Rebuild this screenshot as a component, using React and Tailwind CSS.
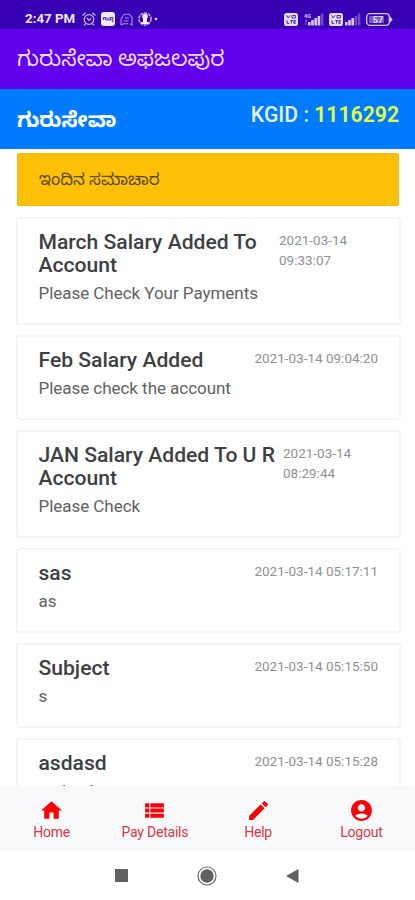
import { MdHome, MdViewList, MdEdit, MdAccountCircle } from 'react-icons/md'

const NEWS = [
  { title: ['March Salary Added To', 'Account'], body: 'Please Check Your Payments', date: '2021-03-14', time: '09:33:07', dateCls: 'w-[99px]' },
  { title: ['Feb Salary Added'], body: 'Please check the account', date: '2021-03-14', time: '09:04:20' },
  { title: ['JAN Salary Added To U R', 'Account'], body: 'Please Check', date: '2021-03-14', time: '08:29:44', dateCls: 'w-[95px]' },
  { title: ['sas'], body: 'as', date: '2021-03-14', time: '05:17:11' },
  { title: ['Subject'], body: 's', date: '2021-03-14', time: '05:15:50' },
  { title: ['asdasd'], body: 'asdasd', date: '2021-03-14', time: '05:15:28' },
]

const TABS = [
  { label: 'Home', Icon: MdHome },
  { label: 'Pay Details', Icon: MdViewList },
  { label: 'Help', Icon: MdEdit },
  { label: 'Logout', Icon: MdAccountCircle },
]

function AlarmIcon() {
  return (
    <svg width="14" height="14" viewBox="0 0 14 14" fill="none" stroke="#cdbcf5" strokeWidth="1.2" strokeLinecap="round">
      <circle cx="7" cy="7.5" r="4.8" />
      <path d="M1 3.2 3.2 1.2M13 3.2 10.8 1.2M5 6.2 7 8.4 9 6.6M3.2 12.2 2.2 13.2M10.8 12.2l1 1" />
    </svg>
  )
}

function AppBadgeIcon() {
  return (
    <svg width="14" height="14" viewBox="0 0 14 14">
      <rect width="14" height="14" rx="3" fill="#f1ebff" />
      <path d="M2.5 8V5.5h2V8M6 5.5V8h2V5.5M9.5 5.5h2.2V8H9.5zM11.7 8v2.2" fill="none" stroke="#5a35bd" strokeWidth="1.1" />
    </svg>
  )
}

function GhostIcon() {
  return (
    <svg width="13" height="13" viewBox="0 0 13 13" fill="none" stroke="#a98fe6" strokeWidth="1.1">
      <path d="M1 12V6l3.2-4.8h5L12 4.5V12l-2-1.2M1 12l2.4-1.2h4.8" />
      <path d="M5 5h4M3.5 8h5" />
    </svg>
  )
}

function PersonBadgeIcon() {
  return (
    <svg width="20" height="14" viewBox="0 0 20 14">
      <circle cx="7" cy="7" r="6" fill="none" stroke="#b9a2ee" strokeWidth="1.6" strokeDasharray="3 0.8" />
      <circle cx="7" cy="4.6" r="2.8" fill="#f1ebff" />
      <path d="M5 6h4v4h2v2H3v-2h2z" fill="#f1ebff" />
      <circle cx="18" cy="7" r="1.3" fill="#e5dbff" />
    </svg>
  )
}

function VolteIcon() {
  return (
    <svg width="14" height="13" viewBox="0 0 14 13">
      <rect width="14" height="13" rx="2.5" fill="#e5dbff" />
      <path d="M2.5 2.3 4.2 5 6 2.3M8 2.5h3.3V5H8zM3 7.3v3h2.4M6.4 7.5h2.4M7.6 7.5v3M11.8 7.5H9.9v2.8h1.9M9.9 8.9h1.6" fill="none" stroke="#4a22b8" strokeWidth="1" />
    </svg>
  )
}

function SignalIcon({ network, strength }) {
  return (
    <svg width={network ? 20 : 16} height="13" viewBox={network ? '-4 0 20 13' : '0 0 16 13'}>
      {network && <text x="-4" y="4.5" fontSize="5.5" fontWeight="700" fill="#d6c8fa" fontFamily="Roboto, sans-serif">4G</text>}
      {network && <path d="M-2 7v5M-3 8l1-1 1 1" fill="none" stroke="#9277df" strokeWidth=".9" />}
      {[3.5, 5.5, 7.5, 9.5, 12].map((h, i) => (
        <rect key={h} x={i * 3.2} y={12.5 - h} width="2.6" height={h} fill={i < strength ? '#d6c8fa' : '#6f4bcb'} />
      ))}
    </svg>
  )
}

function BatteryIcon() {
  return (
    <svg width="27" height="13" viewBox="0 0 27 13">
      <rect x=".7" y=".7" width="22.6" height="11.6" rx="3.2" fill="none" stroke="#d6c8fa" strokeWidth="1.3" />
      <rect x="3" y="3" width="15" height="7" rx="1" fill="#7958cf" />
      <path d="M24 3.2 26.7 6.5 24 9.8z" fill="#d6c8fa" />
      <text x="12" y="9.6" textAnchor="middle" fontSize="9" fontWeight="700" fill="#e9e0ff" fontFamily="Roboto, sans-serif">57</text>
    </svg>
  )
}

function StatusBar() {
  return (
    <div className="flex h-[29px] items-center bg-[#3700b3] pl-[25px] pr-[22px] pt-[9px]">
      <span className="w-[57px] text-[13.3px] font-bold leading-none text-[#eee8ff]">2:47 PM</span>
      <div className="flex items-center gap-[5px]">
        <AlarmIcon />
        <AppBadgeIcon />
        <GhostIcon />
        <PersonBadgeIcon />
      </div>
      <div className="ml-auto flex items-center">
        <VolteIcon />
        <span className="ml-[6px]"><SignalIcon network strength={4} /></span>
        <span className="ml-[5px]"><VolteIcon /></span>
        <span className="ml-[2px]"><SignalIcon strength={3} /></span>
        <span className="ml-[5px]"><BatteryIcon /></span>
      </div>
    </div>
  )
}

function NewsCard({ item }) {
  return (
    <div className={'shrink-0 rounded-[3px] border-2 border-[#f5f5f6] bg-white pl-[20.5px] pr-[21px] pt-[11px] ' + (item.title.length > 1 ? 'h-[108px]' : 'h-[85px]')}>
      <div className="flex justify-between">
        <h2 className="text-[21.1px] font-medium leading-[23px] text-[#3d4043]">
          {item.title.map(line => <span key={line} className="block whitespace-nowrap">{line}</span>)}
        </h2>
        <p className={'text-[13.5px] leading-5 text-[#8f9193] ' + (item.dateCls || '')}>{item.date} {item.time}</p>
      </div>
      <p className="mt-[6px] text-[17px] leading-[22px] tracking-[-0.04px] text-[#606163]">{item.body}</p>
    </div>
  )
}

export default function App() {
  return (
    <div className="flex h-[900px] w-[415px] flex-col overflow-hidden bg-white font-[Roboto,'Noto_Sans_Kannada','Noto_Sans',sans-serif]">
      <StatusBar />
      <header className="flex h-[60px] shrink-0 items-center bg-[#6200ee] px-[17px] text-[21.8px] text-[#e9ddff]">
        <h1 className="whitespace-nowrap leading-none">ಗುರುಸೇವಾ ಅಫಜಲಪುರ</h1>
      </header>
      <div className="flex h-[60px] shrink-0 justify-between bg-[#007bff] pl-[17px] pr-4">
        <span className="pt-[19px] text-[21px] font-bold leading-6 text-white">ಗುರುಸೇವಾ</span>
        <span className="whitespace-nowrap pt-[14px] text-[21.2px] font-medium leading-6 text-[#e2f0ff]">
          KGID : <span className="font-semibold text-[#e4ff3c]">1116292</span>
        </span>
      </div>

      <main className="flex min-h-0 flex-1 flex-col gap-[10px] overflow-hidden pl-4 pr-[14px] pt-[4px]">
        <div className="mb-px ml-px mr-[2px] flex h-[53px] shrink-0 items-center rounded-[2px] border border-[#f0b90c] bg-[#ffc107] pl-[21px] text-[16.8px] text-[#5a4a18]">
          ಇಂದಿನ ಸಮಾಚಾರ
        </div>
        {NEWS.map(item => <NewsCard key={item.time} item={item} />)}
      </main>

      <nav className="flex h-[65px] shrink-0 bg-[#f8f9fa] pr-[2px]">
        {TABS.map(({ label, Icon }) => (
          <a key={label} className="flex flex-1 flex-col items-center pt-[12px] text-[#fb0007]">
            <Icon size={25} />
            <span className="mt-[-0.5px] text-[14px] leading-[18px] tracking-[-0.22px] text-[#dc3545]">{label}</span>
          </a>
        ))}
      </nav>

      <div className="flex h-[49px] shrink-0 items-center justify-between pl-[115px] pr-[116px]">
        <span className="size-[13px] bg-[#606060]" />
        <svg width="20" height="20" viewBox="0 0 20 20">
          <circle cx="10" cy="10" r="9" fill="none" stroke="#6a6a6a" strokeWidth="1.2" />
          <circle cx="10" cy="10" r="6.7" fill="#606060" />
        </svg>
        <svg width="13" height="14" viewBox="0 0 13 14">
          <path d="M0 7 12.5 0v14z" fill="#606060" />
        </svg>
      </div>
    </div>
  )
}
